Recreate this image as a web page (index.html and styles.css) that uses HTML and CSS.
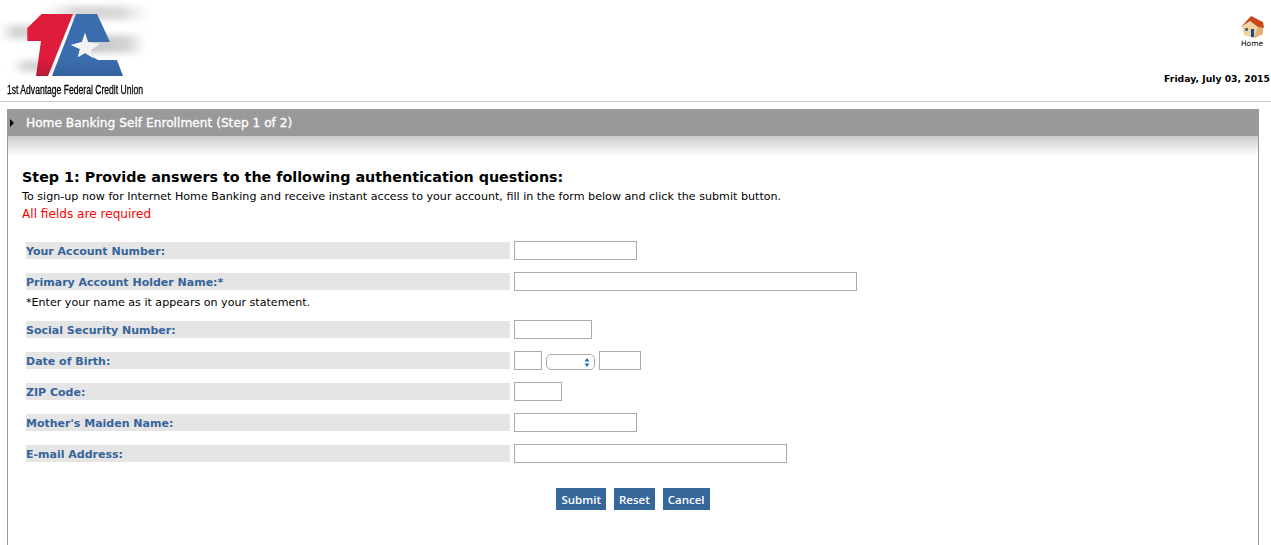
FILE: index.html
```html
<!DOCTYPE html>
<html>
  <head>
    <title>Home Banking Self Enrollment</title>
    <link rel="stylesheet" href="styles.css">
  </head>
  <body>
    <div class="header">
      <div class="logo">
        <svg width="152" height="80" viewBox="0 0 152 80">
          <defs>
            <linearGradient id="streak" x1="0" x2="1" y1="0" y2="0">
              <stop offset="0" stop-color="#d4d4d4" stop-opacity="0"/>
              <stop offset=".3" stop-color="#d4d4d4"/>
              <stop offset=".7" stop-color="#d8d8d8"/>
              <stop offset="1" stop-color="#ddd" stop-opacity="0"/>
            </linearGradient>
            <linearGradient id="band" x1="0" x2="1" y1="0" y2="0">
              <stop offset="0" stop-color="#c4c4c4"/>
              <stop offset=".7" stop-color="#d4d4d4"/>
              <stop offset="1" stop-color="#ddd" stop-opacity="0"/>
            </linearGradient>
            <linearGradient id="red" x1="0" x2="0" y1="0" y2="1">
              <stop offset=".7" stop-color="#e01c3c"/>
              <stop offset="1" stop-color="#b41c34"/>
            </linearGradient>
            <linearGradient id="blue" x1="0" x2="0" y1="0" y2="1">
              <stop offset=".75" stop-color="#3a6cae"/>
              <stop offset="1" stop-color="#33619c"/>
            </linearGradient>
            <filter id="soft"><feGaussianBlur stdDeviation="3"/></filter>
          </defs>
          <g filter="url(#soft)">
            <rect x="45" y="6" width="106" height="14" fill="url(#streak)"/>
            <rect x="0" y="25" width="50" height="14" fill="url(#streak)"/>
            <rect x="84" y="35" width="62" height="18" fill="url(#band)"/>
            <rect x="12" y="60" width="50" height="12" fill="url(#streak)"/>
          </g>
          <path d="M41.7 14H73L48 76H36L41 41H27.3V28Z" fill="url(#red)"/>
          <path d="M76 14H97L110 42H88L85 33L82 42L71 45L80 49L78 57L85 53L98 60H117L123 76H52Z" fill="url(#blue)"/>
          <path d="M85 33L88 42L100 44L91 50L93 58L85 53L78 57L80 49L71 45L82 42Z" fill="#f2f2f2"/>
        </svg>
        <div class="logo-name">1st Advantage Federal Credit Union</div>
      </div>
      <div class="header-right">
        <a class="home" href="#">
          <svg width="24" height="24" viewBox="0 0 24 24">
            <path d="M2 12L10 6L18 11L23 12V19L14 23L4 20Z" fill="#f2d4a0"/>
            <path d="M14 23L23 19V12L18 11Z" fill="#e2b070"/>
            <path d="M1 12L11 1L23 7L24 13L18 12L10 6Z" fill="#c8481c"/>
            <rect x="11" y="14" width="3" height="8" fill="#1c4c8c"/>
            <rect x="5" y="13" width="3" height="3" fill="#5a6a7a"/>
          </svg>
          <span>Home</span>
        </a>
        <div class="date">Friday, July 03, 2015</div>
      </div>
    </div>
    <div class="panel">
      <div class="panel-title"><span class="arrow"></span>Home Banking Self Enrollment (Step 1 of 2)</div>
      <div class="panel-body">
        <h1>Step 1: Provide answers to the following authentication questions:</h1>
        <p class="intro">To sign-up now for Internet Home Banking and receive instant access to your account, fill in the form below and click the submit button.</p>
        <p class="required">All fields are required</p>
        <div class="form">
          <div class="row"><label>Your Account Number:</label><input class="w123" type="text"></div>
          <div class="row"><label>Primary Account Holder Name:*</label><input class="w343" type="text"></div>
          <p class="note">*Enter your name as it appears on your statement.</p>
          <div class="row"><label>Social Security Number:</label><input class="w78" type="text"></div>
          <div class="row"><label>Date of Birth:</label><input class="w28" type="text"><select class="month"></select><input class="w42" type="text"></div>
          <div class="row"><label>ZIP Code:</label><input class="w48" type="text"></div>
          <div class="row"><label>Mother's Maiden Name:</label><input class="w123" type="text"></div>
          <div class="row"><label>E-mail Address:</label><input class="w273" type="text"></div>
        </div>
        <div class="buttons">
          <button>Submit</button><button>Reset</button><button>Cancel</button>
        </div>
      </div>
    </div>
  </body>
</html>
```

FILE: styles.css
```css
html,
body {
  margin: 0;
  height: 100%;
  overflow: hidden;
  background: #fff;
  font-family: "DejaVu Sans", Verdana, sans-serif;
  color: #000;
}
.header {
  display: flex;
  justify-content: space-between;
  height: 101px;
  border-bottom: 1px solid #ccc;
}
.logo { width: 200px; }
.logo svg { display: block; }
.logo-name {
  margin: 3px 0 0 7px;
  font-family: "Liberation Sans", sans-serif;
  font-size: 13px;
  line-height: 14px;
  white-space: nowrap;
  -webkit-text-stroke: .3px #000;
  transform: scaleX(.66);
  transform-origin: left;
}
.header-right {
  display: flex;
  flex-direction: column;
  align-items: flex-end;
}
.home {
  display: flex;
  flex-direction: column;
  align-items: center;
  margin: 15px 7px 0 0;
  color: #000;
  text-decoration: none;
  font-size: 7.5px;
  line-height: 10px;
}
.date {
  margin: 24px 1px 0 0;
  font-size: 9.25px;
  font-weight: bold;
  line-height: 12px;
}
.panel {
  margin: 7px 12px 0 7px;
  border-left: 1px solid #999;
  border-right: 1px solid #999;
}
.panel-title {
  display: flex;
  align-items: center;
  height: 27px;
  margin: 0 -1px;
  background: #999;
  color: #fff;
  font-size: 12.2px;
  -webkit-text-stroke: .3px #fff;
}
.arrow {
  width: 0;
  height: 0;
  margin: 0 12px 0 3px;
  border-left: 4px solid #000;
  border-top: 4px solid transparent;
  border-bottom: 4px solid transparent;
}
.panel-body {
  height: 378px;
  padding: 31px 14px 0;
  background: linear-gradient(#ccc, #fff 20px) no-repeat;
}
h1 {
  margin: 0;
  font-size: 14.3px;
  line-height: 20px;
}
.intro {
  margin: 1px 0 0;
  font-size: 11.13px;
  line-height: 18px;
}
.required {
  margin: 0;
  color: #f00;
  font-size: 12.1px;
  line-height: 17px;
}
.form {
  display: flex;
  flex-direction: column;
  margin: 18px 0 0 4px;
}
.row {
  display: flex;
  align-items: center;
  gap: 4px;
  height: 19px;
  margin-bottom: 12px;
}
.row label {
  width: 484px;
  height: 17px;
  background: #e5e5e5;
  color: #36639a;
  font-size: 11px;
  font-weight: bold;
  line-height: 20px;
}
.note {
  margin: -9px 0 9px;
  font-size: 11.1px;
  line-height: 17px;
}
input {
  box-sizing: border-box;
  height: 19px;
  margin: 0;
  padding: 0;
  border: 1px solid #aaa;
  background: #fff;
}
.w28 { width: 28px; }
.w42 { width: 42px; }
.w48 { width: 48px; }
.w78 { width: 78px; }
.w123 { width: 123px; }
.w273 { width: 273px; }
.w343 { width: 343px; }
.month {
  box-sizing: border-box;
  width: 49px;
  height: 16px;
  margin-top: 3px;
  border: 1px solid #aaa;
  border-radius: 5px;
  appearance: none;
  background: #fff url("data:image/svg+xml,%3Csvg xmlns='http://www.w3.org/2000/svg' width='6' height='9'%3E%3Cpath d='M3 0L5.5 3.5H.5ZM3 9L.5 5.5H5.5Z' fill='%231a6fb0'/%3E%3C/svg%3E") no-repeat 37px 3px;
}
.buttons {
  display: flex;
  justify-content: center;
  gap: 8px;
  margin-top: 13px;
}
button {
  height: 22px;
  padding: 0 5px;
  border: 0;
  background: #36689b;
  color: #fff;
  font-family: "Open Sans", sans-serif;
  font-size: 11.5px;
  font-weight: 600;
}
```
